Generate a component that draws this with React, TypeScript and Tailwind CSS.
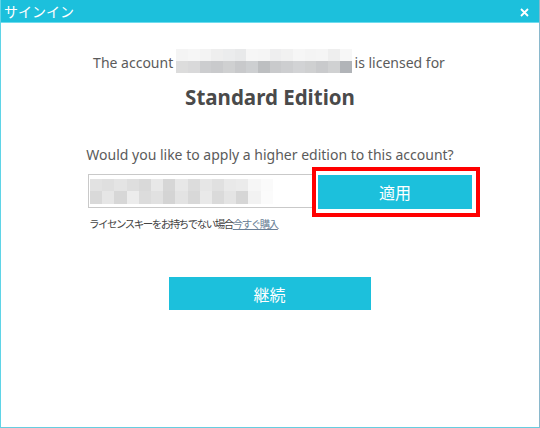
import React from "react";

const accTop = ["#f4f4f4", "#f6f6f6", "#f3f3f3", "#eeeeee", "#ebeced", "#e8e9ea", "#f6f6f6", "#f5f5f5", "#eeeeef", "#f1f1f1", "#f6f6f6", "#f4f4f4", "#f5f5f5", "#eeeeee", "#f7f7f7"];
const accBot = ["#dcdcdc", "#d9d9da", "#cccdcf", "#c9cacc", "#cfd0d1", "#c8c9cb", "#cdcfd1", "#bdbfc1", "#c9cacc", "#cdced0", "#d2d3d5", "#cfd0d1", "#c9cacc", "#d0d1d2", "#b1b4b8"];
const inTop = ["#e2e2e2", "#dfdfdf", "#e4e4e4", "#dedede", "#d9d9d9", "#e8e8e8", "#d6d6d6", "#e7e7e7", "#dcdcdc", "#e6e6e6", "#e0e0e0", "#e9e9e9", "#ebebeb", "#f6f6f6", "#fafafa"];
const inBot = ["#d9d9d9", "#e6e6e6", "#d7d7d7", "#ececec", "#dcdcdc", "#e1e1e1", "#d4d4d4", "#e3e3e3", "#d8d8d8", "#e9e9e9", "#dadada", "#e4e4e4", "#d6d6d6", "#f2f2f2", "#fbfbfb"];

function Blur({ top, bot, w, h }: { top: string[]; bot: string[]; w: number; h: number }) {
  return (
    <div className="flex flex-col">
      <div className="flex">
        {top.map((c, i) => (
          <div key={i} style={{ background: c, width: w, height: h }} />
        ))}
      </div>
      <div className="flex">
        {bot.map((c, i) => (
          <div key={i} style={{ background: c, width: w, height: h }} />
        ))}
      </div>
    </div>
  );
}

const jp = { fontFamily: '"Noto Sans CJK JP", sans-serif' };

export default function App() {
  return (
    <div
      className="w-[540px] h-[428px] bg-white flex flex-col border-l border-b border-l-[#5fd4e7] border-b-[#66cde0] border-r border-r-[#8ab8cc] overflow-hidden"
      style={{ fontFamily: '"Noto Sans", "Noto Sans CJK JP", sans-serif' }}
    >
      <div className="h-[23px] bg-[#1cc0dc] border-b border-b-[#6fdcee] flex items-center justify-between pl-[4px] pr-[10px] shrink-0 -ml-px">
        <span className="text-white text-[14px] leading-none" style={jp}>サインイン</span>
        <svg width="9" height="9" viewBox="0 0 9 9" className="mt-[2px]">
          <path d="M1 1 L8 8 M8 1 L1 8" stroke="white" strokeWidth="1.8" />
        </svg>
      </div>
      <div className="flex flex-col items-center">
        <div className="mt-[26px] flex items-center text-[14px] text-[#5b5b5b] h-[24px] -ml-[2px]">
          <span className="mr-[3px] mt-[2px]">The account</span>
          <Blur top={accTop} bot={accBot} w={11.7} h={12} />
          <span className="ml-[3px] mt-[2px]">is licensed for</span>
        </div>
        <div className="mt-[10px] text-[20.5px] font-bold text-[#4a4a4a] leading-[28px]">Standard Edition</div>
        <div className="mt-[33px] text-[14px] text-[#5b5b5b] leading-[22px]">Would you like to apply a higher edition to this account?</div>
      </div>
      <div className="ml-[87px] mt-[1px] flex items-start">
        <div className="mt-[7px] w-[232px] h-[34px] border border-[#c9c9c9] flex items-center pl-px shrink-0">
          <Blur top={inTop} bot={inBot} w={12.2} h={12.5} />
        </div>
        <div className="-ml-[8px] border-[4px] border-[#ff0000] pl-[2px] pr-[4px] py-[4px] bg-white relative">
          <div className="w-[154px] h-[34px] bg-[#1cc0dc] flex items-center justify-center text-white text-[16px]" style={jp}>
            適用
          </div>
        </div>
      </div>
      <div className="ml-[88px] -mt-[1px] text-[10.5px] tracking-[-1.5px] text-[#444] leading-[16px]" style={jp}>
        ライセンスキーをお持ちでない場合<span className="underline text-[#6a7f96]">今すぐ購入</span>
      </div>
      <div className="flex justify-center mt-[45px]">
        <div className="w-[202px] h-[33px] bg-[#1cc0dc] flex items-center justify-center text-white text-[16px] ml-[-1px]" style={jp}>
          継続
        </div>
      </div>
    </div>
  );
}
